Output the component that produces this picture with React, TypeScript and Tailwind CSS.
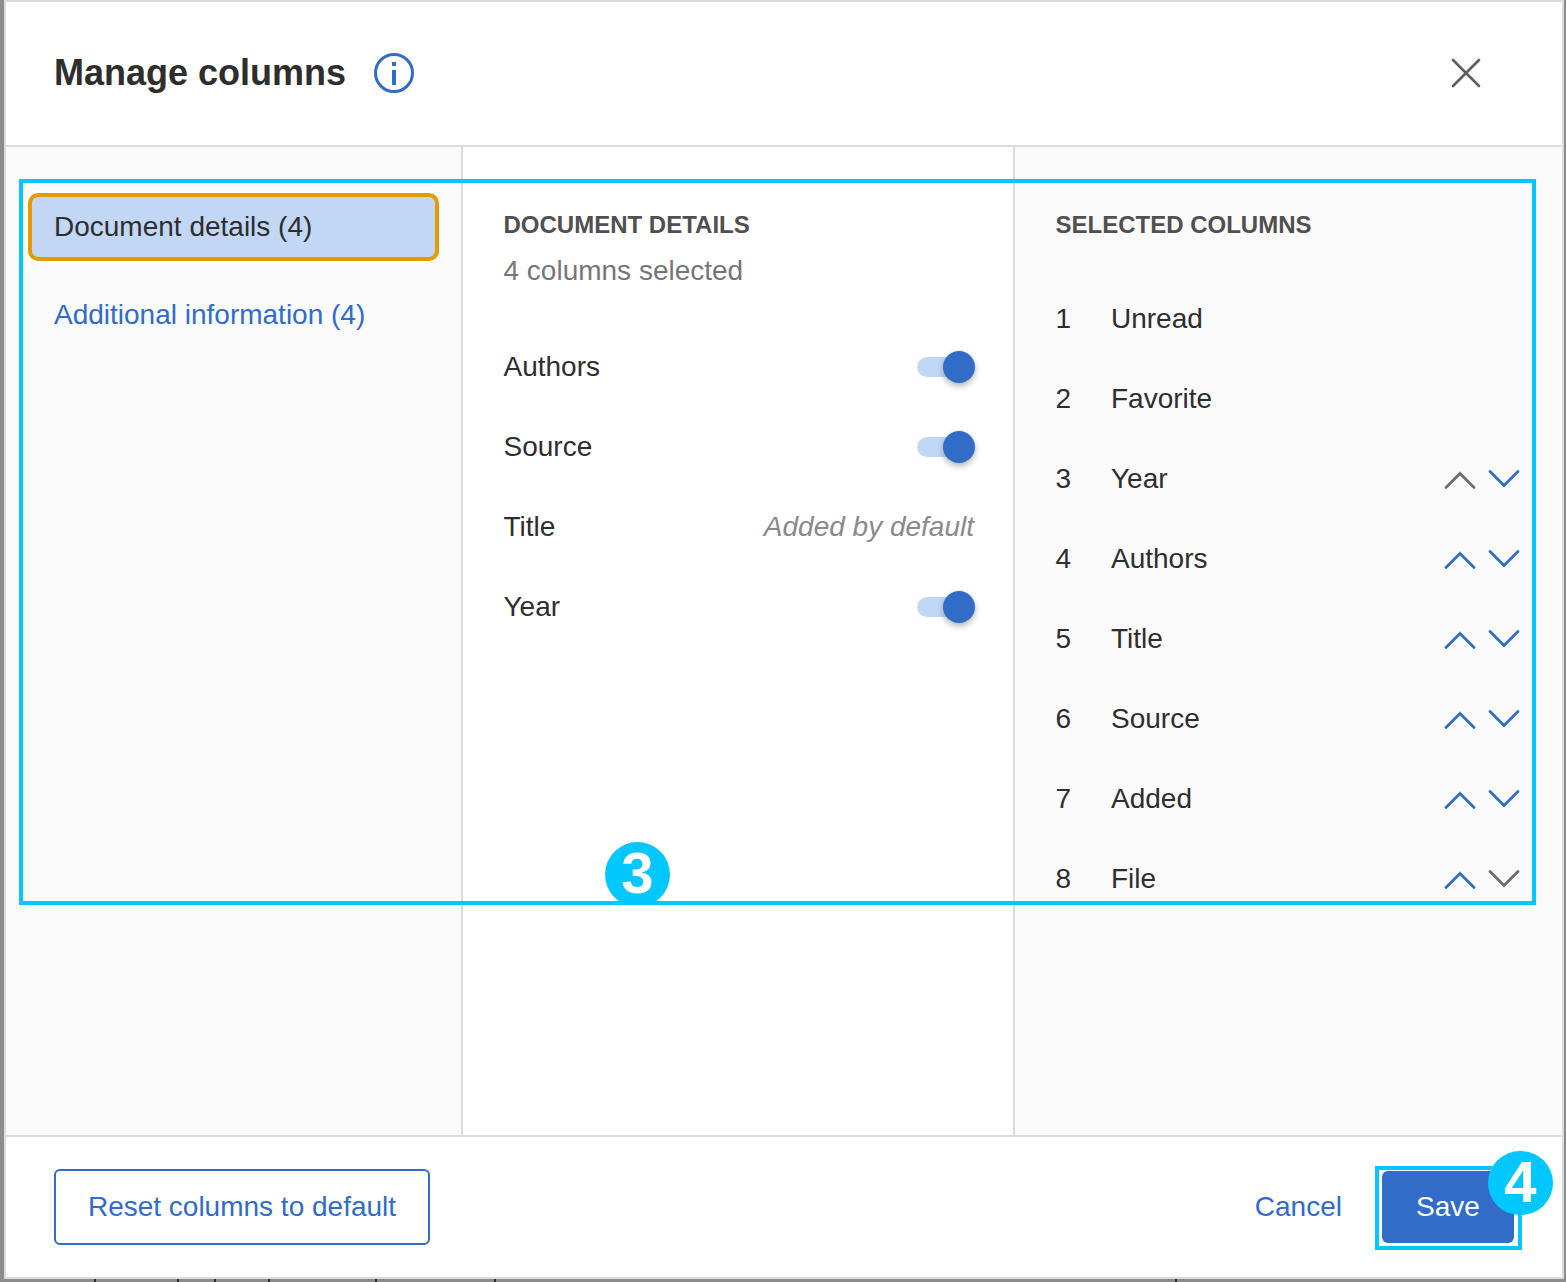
import React from "react";

const docRows = [
  { name: "Authors", on: true },
  { name: "Source", on: true },
  { name: "Title", on: false },
  { name: "Year", on: true },
];

const selected = ["Unread", "Favorite", "Year", "Authors", "Title", "Source", "Added", "File"];

// marcas de la tabla que queda detras del modal
const ticks = ["left-[94px]", "left-[177px]", "left-[214px]", "left-[268px]", "left-[375px]", "left-[494px]", "left-[1175px]"];

const Toggle = () => (
  <div className="relative w-[58px] h-5">
    <div className="absolute left-0 top-0 h-5 w-[44px] rounded-full bg-[#c2d7f6]" />
    <div className="absolute right-0 top-[-6px] h-8 w-8 rounded-full bg-[#306cc8] shadow-[0_3px_6px_rgba(0,0,0,0.3)]" />
  </div>
);

const Chevron = ({ up, active }: { up: boolean; active: boolean }) => (
  <svg width="34" height="20" viewBox="0 0 34 20" fill="none" className={active ? "text-[#306cc8]" : "text-[#6e6e6e]"}>
    <path
      d={up ? "M3 17.5L17 3.5L31 17.5" : "M3 2.5L17 16.5L31 2.5"}
      stroke="currentColor"
      strokeWidth="2.8"
      strokeLinecap="round"
      strokeLinejoin="miter"
    />
  </svg>
);

const App = () => {
  return (
    <div className="relative w-[1566px] h-[1282px] overflow-hidden bg-[#8c8c8c] pl-1 pr-[2px] pb-[3px] font-['Liberation_Sans',Arial,sans-serif] text-[28px] text-[#2e2e2e]">
      <div className="flex flex-col h-full bg-white border-2 border-[#dcdcdc]">
        {/* Cabecera */}
        <div className="flex items-center h-[145px] shrink-0 pl-[48px] pr-[81px] pb-[2px] border-b-2 border-[#dcdcdc]">
          <h1 className="text-[36px] font-bold leading-none text-[#2e2e2e]">Manage columns</h1>
          <svg width="42" height="42" viewBox="0 0 42 42" fill="none" className="ml-[27px] text-[#306cc8]">
            <circle cx="21" cy="21" r="18.5" stroke="currentColor" strokeWidth="3" />
            <rect x="19" y="18" width="4" height="15" fill="currentColor" />
            <rect x="19" y="10" width="4" height="4" fill="currentColor" />
          </svg>
          <svg width="30" height="30" viewBox="0 0 30 30" fill="none" className="ml-auto text-[#5e5e5e]">
            <path d="M2 2L28 28M28 2L2 28" stroke="currentColor" strokeWidth="2.6" strokeLinecap="round" />
          </svg>
        </div>

        {/* Columnas */}
        <div className="flex flex-1 min-h-0">
          <div className="w-[457px] shrink-0 bg-[#fafafa] border-r-2 border-[#dcdcdc] pt-[46px] pl-[22px] pr-[22px]">
            <div className="flex items-center h-[68px] pl-[22px] rounded-[10px] border-[4px] border-[#e59a00] bg-[#c2d7f6] shadow-[0_0_0_2px_white]">
              Document details (4)
            </div>
            <div className="mt-[36px] pl-[26px] leading-[36px] text-[#306cc8]">Additional information (4)</div>
          </div>

          <div className="w-[552px] shrink-0 border-r-2 border-[#dcdcdc] pt-[62px] pl-[40.5px] pr-[38px]">
            <div className="text-[24px] font-bold leading-[32px] text-[#505050]">DOCUMENT DETAILS</div>
            <div className="mt-[14px] leading-[32px] text-[#767676]">4 columns selected</div>
            <div className="mt-[40px]">
              {docRows.map((row) => (
                <div key={row.name} className="flex items-center justify-between h-20">
                  <span>{row.name}</span>
                  {row.on ? <Toggle /> : <span className="italic text-[#8a8a8a] mr-[1px]">Added by default</span>}
                </div>
              ))}
            </div>
          </div>

          <div className="flex-1 bg-[#fafafa] pt-[62px] pl-[40.5px] pr-[41px]">
            <div className="text-[24px] font-bold leading-[32px] text-[#505050]">SELECTED COLUMNS</div>
            <div className="mt-[38px]">
              {selected.map((name, i) => (
                <div key={name} className="flex items-center h-20">
                  <span className="w-[55.5px]">{i + 1}</span>
                  <span>{name}</span>
                  {i > 1 && (
                    <div className="ml-auto flex gap-[10px] h-6">
                      <div className="mt-[3px]">
                        <Chevron up active={i > 2} />
                      </div>
                      <div className="mt-[2px]">
                        <Chevron up={false} active={i < 7} />
                      </div>
                    </div>
                  )}
                </div>
              ))}
            </div>
          </div>
        </div>

        {/* Pie */}
        <div className="flex items-center h-[142px] shrink-0 pl-[48px] pr-[48px] border-t-2 border-[#dcdcdc]">
          <button className="h-[76px] w-[376px] rounded-[6px] border-2 border-[#306cc8] text-[#306cc8]">
            Reset columns to default
          </button>
          <span className="ml-auto text-[#306cc8]">Cancel</span>
          <button className="ml-[40px] h-[72px] w-[132px] rounded-[6px] bg-[#306cc8] text-white">Save</button>
        </div>
      </div>

      {ticks.map((t) => (
        <div key={t} className={`absolute bottom-0 h-[3px] w-[2px] bg-[#2e2e2e] ${t}`} />
      ))}

      {/* Anotaciones */}
      <div className="absolute left-[19px] top-[179px] w-[1517px] h-[726px] border-[4px] border-[#00c8ff]" />
      <div className="absolute left-[605px] top-[842px] h-[63px] w-[65px] overflow-hidden">
        <div className="flex h-[65px] w-[65px] items-center justify-center rounded-full bg-[#00c8ff] pb-[3px] text-[58px] font-bold leading-none text-white">
          3
        </div>
      </div>
      <div className="absolute left-[1375px] top-[1166px] w-[147px] h-[84px] border-[4px] border-[#00c8ff]" />
      <div className="absolute left-[1488px] top-[1151px] flex h-[64px] w-[65px] items-center justify-center rounded-full bg-[#00c8ff] pb-[2px] text-[58px] font-bold leading-none text-white">
        4
      </div>
    </div>
  );
};

export default App;
